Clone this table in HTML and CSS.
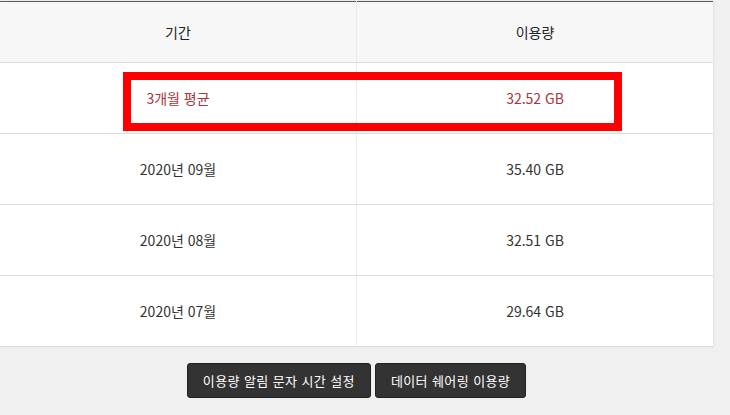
FILE: index.html
```html
<!DOCTYPE html>
<html lang="ko">
<head>
    <meta charset="UTF-8">
    <meta name="viewport" content="width=device-width, initial-scale=1.0">
    <title>데이터 이용량</title>
    <link rel="stylesheet" href="styles.css">
</head>
<body>
    <div class="usage">
        <table class="usage-table">
            <thead>
                <tr>
                    <th>기간</th>
                    <th>이용량</th>
                </tr>
            </thead>
            <tbody>
                <tr class="avg">
                    <td>3개월 평균</td>
                    <td>32.52 GB</td>
                </tr>
                <tr>
                    <td>2020년 09월</td>
                    <td>35.40 GB</td>
                </tr>
                <tr>
                    <td>2020년 08월</td>
                    <td>32.51 GB</td>
                </tr>
                <tr>
                    <td>2020년 07월</td>
                    <td>29.64 GB</td>
                </tr>
            </tbody>
        </table>
        <div class="mark"></div>
        <div class="actions">
            <button class="btn">이용량 알림 문자 시간 설정</button>
            <button class="btn">데이터 쉐어링 이용량</button>
        </div>
    </div>
</body>
</html>
```

FILE: styles.css
```css
body {
    margin: 0;
    padding-top: 1px;
    background-color: #f0f0f0;
    font-family: "Noto Sans CJK KR", "Malgun Gothic", sans-serif;
    color: #333;
}
.usage {
    position: relative;
    width: 713px;
}
.usage-table {
    width: 713px;
    border-collapse: collapse;
    background-color: #fff;
    border-top: 1px solid #5a5a5a;
    box-shadow: 1px 0 2px rgba(0, 0, 0, 0.06);
}
.usage-table th,
.usage-table td {
    width: 50%;
    text-align: center;
    font-size: 14px;
    font-weight: normal;
    border-bottom: 1px solid #dcdcdc;
    padding: 0;
}
.usage-table th + th,
.usage-table td + td {
    border-left: 1px solid #ebebeb;
}
.usage-table th {
    height: 60px;
    background-color: #f7f7f7;
    color: #222;
}
.usage-table td {
    height: 70px;
}
.usage-table tr.avg td {
    color: #a8353a;
}
/* highlight box drawn over the first row */
.mark {
    position: absolute;
    left: 123px;
    top: 71px;
    width: 483px;
    height: 43px;
    border: 8px solid #f00;
}
.actions {
    display: flex;
    justify-content: center;
    gap: 4px;
    padding-top: 16px;
}
.btn {
    font-family: inherit;
    font-size: 13px;
    color: #fff;
    background-color: #333;
    border: 1px solid #222;
    border-radius: 3px;
    height: 35px;
    padding: 0 15px;
    letter-spacing: 0.4px;
}
```
